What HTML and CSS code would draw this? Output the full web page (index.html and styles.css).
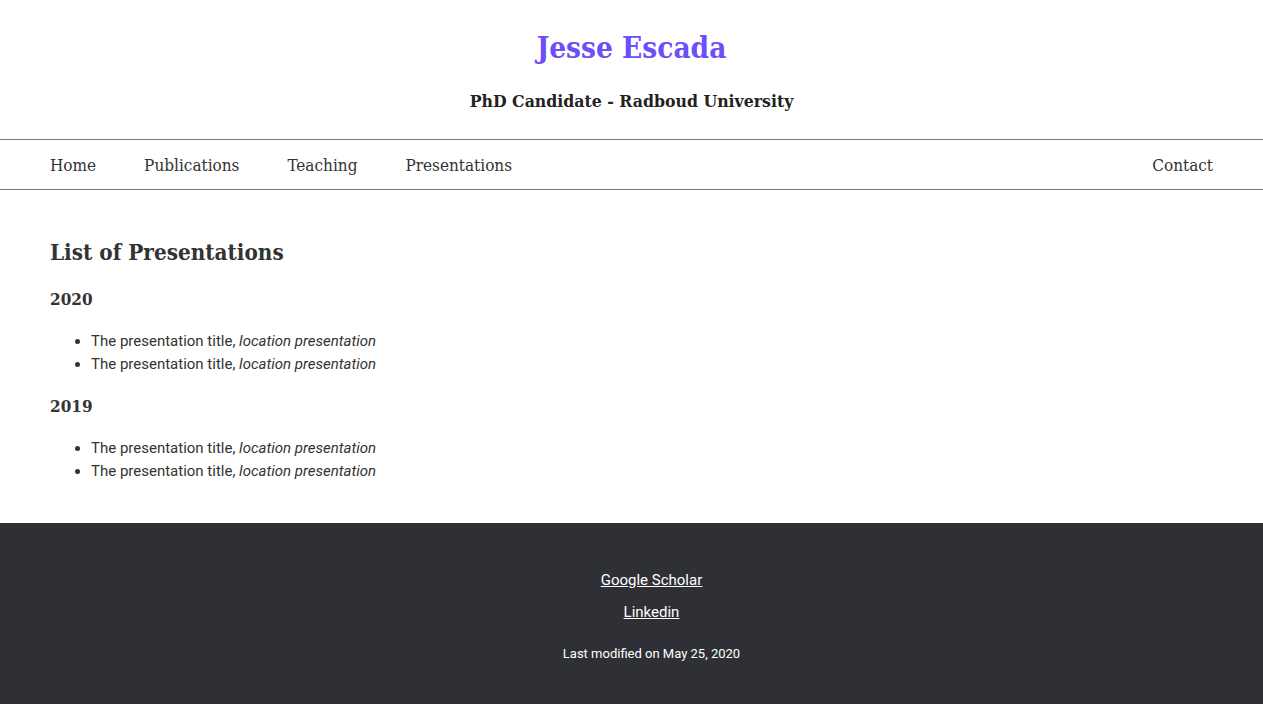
FILE: index.html
```html
<!DOCTYPE html>
<html lang="en">
<head>
<meta charset="utf-8">
<title>Jesse Escada - Presentations</title>
<link rel="stylesheet" href="styles.css">
</head>
<body>
<header class="site-header">
  <h1 class="site-title">Jesse Escada</h1>
  <p class="site-subtitle">PhD Candidate - Radboud University</p>
</header>
<nav class="nav">
  <ul class="nav-left">
    <li><a href="#">Home</a></li>
    <li><a href="#">Publications</a></li>
    <li><a href="#">Teaching</a></li>
    <li><a href="#">Presentations</a></li>
  </ul>
  <a class="nav-right" href="#">Contact</a>
</nav>
<main class="content">
  <h2 class="page-title">List of Presentations</h2>
  <h3 class="year">2020</h3>
  <ul class="pres-list">
    <li>The presentation title, <em>location presentation</em></li>
    <li>The presentation title, <em>location presentation</em></li>
  </ul>
  <h3 class="year">2019</h3>
  <ul class="pres-list">
    <li>The presentation title, <em>location presentation</em></li>
    <li>The presentation title, <em>location presentation</em></li>
  </ul>
</main>
<footer class="footer">
  <a class="footer-link" href="#">Google Scholar</a>
  <a class="footer-link" href="#">Linkedin</a>
  <p class="modified">Last modified on May 25, 2020</p>
</footer>
</body>
</html>
```
FILE: styles.css
```css
html, body {
  margin: 0;
  padding: 0;
  background: #fff;
}
body {
  font-family: Roboto, "Liberation Sans", sans-serif;
  color: #333;
  display: flex;
  flex-direction: column;
  min-height: 704px;
}
.site-title,
.site-subtitle,
.nav,
.page-title,
.year {
  font-family: "Roboto Slab", "DejaVu Serif Condensed", "DejaVu Serif", serif;
  font-stretch: condensed;
}
.site-header {
  text-align: center;
  padding: 29px 0 26px;
}
.site-title {
  font-size: 29.5px;
  font-weight: 700;
  color: #6c4ffb;
  margin: 0;
  line-height: 38px;
}
.site-subtitle {
  font-size: 17.5px;
  font-weight: 700;
  color: #222;
  margin: 22px 0 0;
  line-height: 24px;
}
.nav {
  display: flex;
  justify-content: space-between;
  align-items: center;
  border-top: 1px solid #777;
  border-bottom: 1px solid #777;
  height: 49px;
  padding: 0 50px;
  font-size: 17px;
}
.nav-left {
  display: flex;
  gap: 48px;
  list-style: none;
  margin: 0;
  padding: 0;
}
.nav a {
  color: #333;
  text-decoration: none;
}
.content {
  padding: 47px 50px 40px;
  flex: 0 0 auto;
}
.page-title {
  font-size: 22.3px;
  font-weight: 700;
  margin: 0;
  line-height: 30px;
}
.year {
  font-size: 17px;
  font-weight: 700;
  margin: 20px 0 0;
  line-height: 24px;
}
.pres-list {
  margin: 19px 0 0;
  padding-left: 41px;
  font-size: 15px;
  line-height: 23px;
}
.pres-list + .year {
  margin-top: 18px;
}
.footer {
  flex: 1 0 auto;
  background: #2f3035;
  color: #fff;
  display: flex;
  flex-direction: column;
  align-items: center;
  padding: 47px 0 0 40px;
}
.footer-link {
  color: #fff;
  font-size: 15px;
  line-height: 20px;
  margin-bottom: 12px;
}
.modified {
  font-size: 13px;
  margin: 11px 0 0;
  line-height: 18px;
}
```
